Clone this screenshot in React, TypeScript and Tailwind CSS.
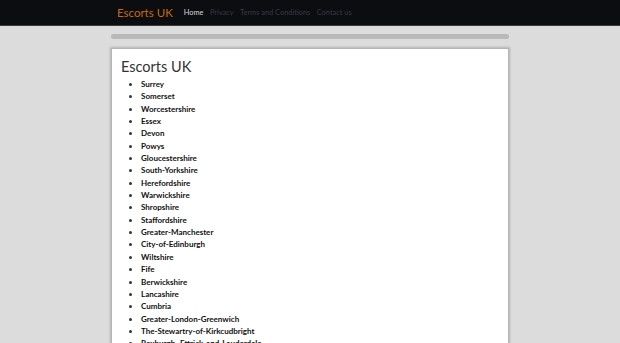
const regions = [
  "Surrey",
  "Somerset",
  "Worcestershire",
  "Essex",
  "Devon",
  "Powys",
  "Gloucestershire",
  "South-Yorkshire",
  "Herefordshire",
  "Warwickshire",
  "Shropshire",
  "Staffordshire",
  "Greater-Manchester",
  "City-of-Edinburgh",
  "Wiltshire",
  "Fife",
  "Berwickshire",
  "Lancashire",
  "Cumbria",
  "Greater-London-Greenwich",
  "The-Stewartry-of-Kirkcudbright",
  "Roxburgh,-Ettrick-and-Lauderdale",
];

export default function App() {
  return (
    <div className="h-[343px] overflow-hidden bg-[#dcdcdc] font-['Lato',sans-serif]">
      {/* Navbar */}
      <nav className="h-[26px] border-b border-[#3a3a3a] bg-[#0b0d11]">
        <div className="mx-auto flex h-full w-[398px] items-center">
          <span className="ml-[6px] text-[11.5px] leading-none text-[#c66a0c]">Escorts UK</span>
          <ul className="ml-[11px] flex items-center gap-[6.5px] text-[7.4px] leading-none">
            <li className="text-[#d8d8d8]">Home</li>
            <li className="text-[#393b41]">Privacy</li>
            <li className="text-[#393b41]">Terms and Conditions</li>
            <li className="text-[#393b41]">Contact us</li>
          </ul>
        </div>
      </nav>

      <div className="mx-auto w-[398px] pt-[8px]">
        <div className="h-[5px] rounded-[3px] bg-[#b9b9b9]" />

        {/* Card */}
        <div className="mt-[9px] border border-[#b5b5b5] bg-white px-[9px] pt-[8px] shadow-[0_0_2px_1px_rgba(0,0,0,0.18)]">
          <h1 className="text-[14.5px] leading-[20px] text-[#333]">Escorts UK</h1>
          <ul className="mt-[1px] list-disc pl-[20px] text-[8px] font-bold leading-[12.35px] text-[#111] marker:text-[#333]">
            {regions.map((r) => (
              <li key={r}>{r}</li>
            ))}
          </ul>
        </div>
      </div>
    </div>
  );
}
